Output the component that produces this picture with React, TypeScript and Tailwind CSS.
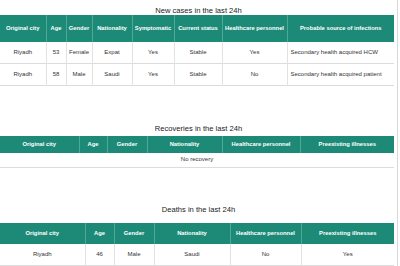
import React from "react";

type T = {
  title: string;
  cols: string[];
  heads: string[];
  rows: (string[] | { span: string })[];
  headCls: string;
  rowCls: string[];
  gapCls: string;
  aligns?: ("c" | "l")[];
};

function Table({ t }: { t: T }) {
  return (
    <div>
      <div className="text-center text-[7.6px] leading-[9px] h-[9px] text-[#222]">{t.title}</div>
      <table className={"border-collapse table-fixed w-[394px] " + t.gapCls}>
        <colgroup>
          {t.cols.map((c, i) => (
            <col key={i} className={c} />
          ))}
        </colgroup>
        <thead>
          <tr className={t.headCls}>
            {t.heads.map((h, i) => (
              <th
                key={i}
                className="bg-[#1d8a78] text-white font-bold text-[5.8px] leading-[7px] p-0 text-center border-l border-[#4fa796] first:border-l-0 whitespace-nowrap"
              >
                {h}
              </th>
            ))}
          </tr>
        </thead>
        <tbody>
          {t.rows.map((r, ri) =>
            Array.isArray(r) ? (
              <tr key={ri} className={"border-b border-[#dcdcdc] " + t.rowCls[ri]}>
                {r.map((c, ci) => (
                  <td
                    key={ci}
                    className={
                      "text-[6px] leading-[7px] p-0 text-[#333] border-l border-[#e2e2e2] first:border-l-0 whitespace-nowrap " +
                      (t.aligns && t.aligns[ci] === "l" ? "text-left pl-[3px]" : "text-center")
                    }
                  >
                    {c}
                  </td>
                ))}
              </tr>
            ) : (
              <tr key={ri} className={"border-b border-[#dcdcdc] " + t.rowCls[ri]}>
                <td colSpan={t.cols.length} className="p-0 text-center text-[6px] leading-[7px] text-[#333]">
                  {r.span}
                </td>
              </tr>
            )
          )}
        </tbody>
      </table>
    </div>
  );
}

const t1: T = {
  title: "New cases in the last 24h",
  cols: ["w-[46px]", "w-[20px]", "w-[26px]", "w-[40px]", "w-[42px]", "w-[48px]", "w-[65px]", "w-[107px]"],
  heads: [
    "Original city",
    "Age",
    "Gender",
    "Nationality",
    "Symptomatic",
    "Current status",
    "Healthcare personnel",
    "Probable source of infections",
  ],
  rows: [
    ["Riyadh", "53", "Female", "Expat", "Yes", "Stable", "Yes", "Secondary health acquired HCW"],
    ["Riyadh", "58", "Male", "Saudi", "Yes", "Stable", "No", "Secondary health acquired patient"],
  ],
  headCls: "h-[27px]",
  rowCls: ["h-[21px]", "h-[22px]"],
  gapCls: "mt-0",
  aligns: ["c", "c", "c", "c", "c", "c", "c", "l"],
};

const t2: T = {
  title: "Recoveries in the last 24h",
  cols: ["w-[79px]", "w-[28px]", "w-[40px]", "w-[75px]", "w-[78px]", "w-[94px]"],
  heads: ["Original city", "Age", "Gender", "Nationality", "Healthcare personnel", "Preexisting illnesses"],
  rows: [{ span: "No recovery" }],
  headCls: "h-[17px]",
  rowCls: ["h-[15px]"],
  gapCls: "mt-[3px]",
};

const t3: T = {
  title: "Deaths in the last 24h",
  cols: ["w-[85px]", "w-[29px]", "w-[40px]", "w-[76px]", "w-[71px]", "w-[93px]"],
  heads: ["Original city", "Age", "Gender", "Nationality", "Healthcare personnel", "Preexisting illnesses"],
  rows: [["Riyadh", "46", "Male", "Saudi", "No", "Yes"]],
  headCls: "h-[21px]",
  rowCls: ["h-[21px]"],
  gapCls: "mt-[9px]",
};

export default function App() {
  return (
    <div className="w-[398px] h-[266px] overflow-hidden bg-white border-r border-[#d8d8d8] font-['Liberation_Sans',Arial,sans-serif] flex flex-col">
      <div className="pt-[6px]">
        <Table t={t1} />
      </div>
      <div className="mt-[38px]">
        <Table t={t2} />
      </div>
      <div className="mt-[37px]">
        <Table t={t3} />
      </div>
    </div>
  );
}
